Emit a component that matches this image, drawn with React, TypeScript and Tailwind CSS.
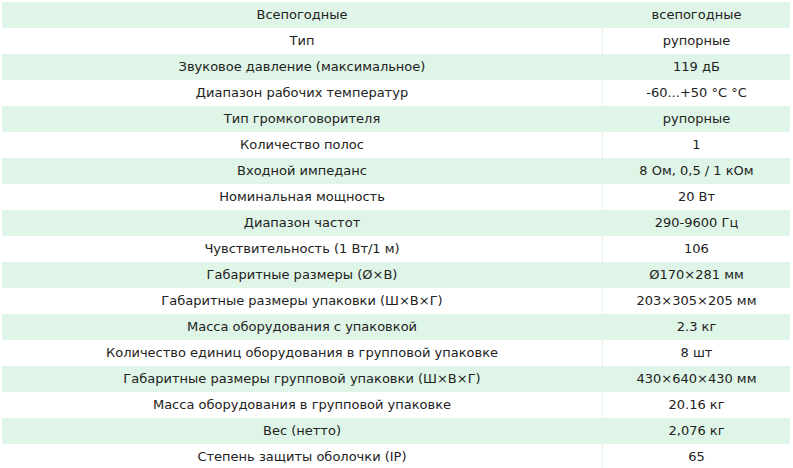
import React from "react";

const rows: [string, string][] = [
  ["Всепогодные", "всепогодные"],
  ["Тип", "рупорные"],
  ["Звуковое давление (максимальное)", "119 дБ"],
  ["Диапазон рабочих температур", "-60...+50 °С °С"],
  ["Тип громкоговорителя", "рупорные"],
  ["Количество полос", "1"],
  ["Входной импеданс", "8 Ом, 0,5 / 1 кОм"],
  ["Номинальная мощность", "20 Вт"],
  ["Диапазон частот", "290-9600 Гц"],
  ["Чувствительность (1 Вт/1 м)", "106"],
  ["Габаритные размеры (Ø×В)", "Ø170×281 мм"],
  ["Габаритные размеры упаковки (Ш×В×Г)", "203×305×205 мм"],
  ["Масса оборудования с упаковкой", "2.3 кг"],
  ["Количество единиц оборудования в групповой упаковке", "8 шт"],
  ["Габаритные размеры групповой упаковки (Ш×В×Г)", "430×640×430 мм"],
  ["Масса оборудования в групповой упаковке", "20.16 кг"],
  ["Вес (нетто)", "2,076 кг"],
  ["Степень защиты оболочки (IP)", "65"],
];

export default function App() {
  return (
    <div className="bg-white w-[793px] h-[468px] overflow-hidden pt-[2px] pl-[2px]">
      <div
        className="w-[788px] flex flex-col text-[13px] text-[#222]"
        style={{ fontFamily: '"DejaVu Sans", Verdana, sans-serif' }}
      >
        {rows.map(([k, v], i) => (
          <div
            key={i}
            className={`flex h-[26px] items-center ${i % 2 === 0 ? "bg-[#dff5e7]" : "bg-white"}`}
          >
            <div className="w-[601px] h-full flex items-center justify-center border-r border-[#dff5e7]">
              {k}
            </div>
            <div className="flex-1 h-full flex items-center justify-center">{v}</div>
          </div>
        ))}
      </div>
    </div>
  );
}
